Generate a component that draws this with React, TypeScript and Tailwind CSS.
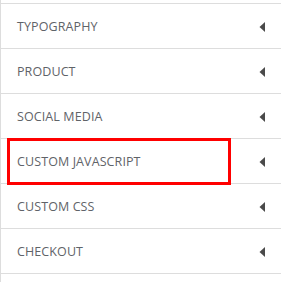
const items = [
  "TYPOGRAPHY",
  "PRODUCT",
  "SOCIAL MEDIA",
  "CUSTOM JAVASCRIPT",
  "CUSTOM CSS",
  "CHECKOUT",
];

function Caret() {
  return (
    <svg width="6" height="10" viewBox="0 0 6 10" className="shrink-0">
      <path d="M6 0 L0.5 5 L6 10 Z" fill="#4a4a4a" />
    </svg>
  );
}

export default function App() {
  return (
    <div
      className="w-[281px] h-[282px] bg-white border-l border-[#dddddd] overflow-hidden"
      style={{ fontFamily: '"Open Sans", "Liberation Sans", sans-serif' }}
    >
      <div className="h-[4px] border-b border-[#dddddd]" />
      {items.map((label) => (
        <div
          key={label}
          className="relative h-[45px] border-b border-[#dddddd] flex items-center justify-between pl-[16px] pr-[16px]"
        >
          <span className="text-[12.5px] leading-none pt-[2px] text-[#5f6368] tracking-[0.1px]">{label}</span>
          <span className="pt-[1px]">
            <Caret />
          </span>
          {label === "CUSTOM JAVASCRIPT" && (
            <div className="absolute left-[6px] top-[-1px] w-[224px] h-[47px] border-[3px] border-[#ff0000] pointer-events-none" />
          )}
        </div>
      ))}
    </div>
  );
}
